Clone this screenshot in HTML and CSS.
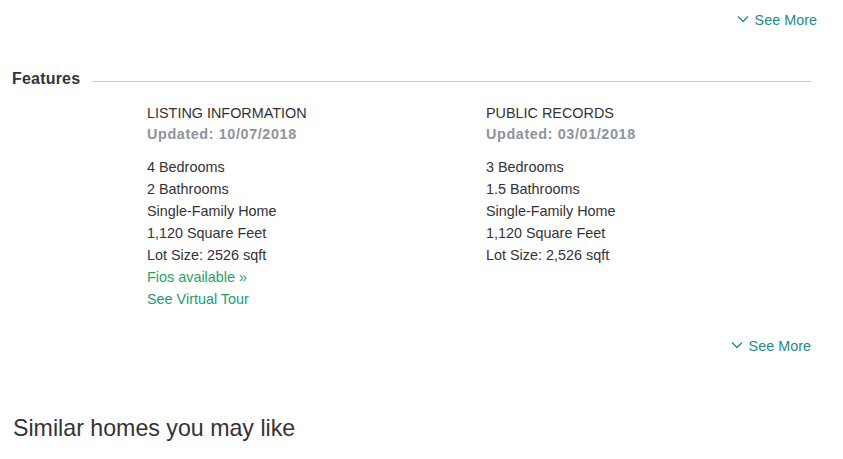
FILE: index.html
```html
<!doctype html>
<html>
<head>
  <meta charset="utf-8">
  <title>Features</title>
  <link rel="stylesheet" href="styles.css">
</head>
<body>
  <div class="more-row top">
    <a class="see-more" href="#">
      <svg width="12" height="8" viewBox="0 0 12 8"><path d="M1 1.5 L6 6.5 L11 1.5" fill="none" stroke="currentColor" stroke-width="1.3"/></svg>
      See More
    </a>
  </div>

  <div class="section-title">
    <h3>Features</h3>
    <span class="rule"></span>
  </div>

  <div class="feature-cols">
    <div class="col">
      <div class="col-title">LISTING INFORMATION</div>
      <div class="updated">Updated: 10/07/2018</div>
      <ul>
        <li>4 Bedrooms</li>
        <li>2 Bathrooms</li>
        <li>Single-Family Home</li>
        <li>1,120 Square Feet</li>
        <li>Lot Size: 2526 sqft</li>
        <li><a class="fios" href="#">Fios available &raquo;</a></li>
        <li><a class="tour" href="#">See Virtual Tour</a></li>
      </ul>
    </div>
    <div class="col">
      <div class="col-title">PUBLIC RECORDS</div>
      <div class="updated">Updated: 03/01/2018</div>
      <ul>
        <li>3 Bedrooms</li>
        <li>1.5 Bathrooms</li>
        <li>Single-Family Home</li>
        <li>1,120 Square Feet</li>
        <li>Lot Size: 2,526 sqft</li>
      </ul>
    </div>
  </div>

  <div class="more-row bottom">
    <a class="see-more" href="#">
      <svg width="12" height="8" viewBox="0 0 12 8"><path d="M1 1.5 L6 6.5 L11 1.5" fill="none" stroke="currentColor" stroke-width="1.3"/></svg>
      See More
    </a>
  </div>

  <h2 class="similar">Similar homes you may like</h2>
</body>
</html>
```

FILE: styles.css
```css
body {
  margin: 0;
  font-family: "Liberation Sans", Arial, sans-serif;
  font-size: 14px;
  color: #333;
  background: #fff;
}

a {
  text-decoration: none;
}

.more-row {
  display: flex;
  justify-content: flex-end;
}

.more-row.top {
  padding: 5px 26px 0 0;
  height: 30px;
}

.more-row.bottom {
  padding: 21px 32px 0 0;
  height: 30px;
}

.see-more {
  display: flex;
  align-items: center;
  gap: 6px;
  color: #1f8a86;
  font-size: 14.4px;
  line-height: 18px;
}

.see-more svg {
  margin-top: -2px;
}

.section-title {
  display: flex;
  align-items: center;
  gap: 12px;
  margin: 34px 32px 0 12px;
}

.section-title h3 {
  margin: 0;
  font-size: 16px;
  font-weight: bold;
  color: #333;
  line-height: 20px;
  letter-spacing: 0.2px;
}

.rule {
  flex-grow: 1;
  height: 1px;
  background: #ccc;
  margin-top: 4px;
}

.feature-cols {
  display: grid;
  grid-template-columns: 339px 339px;
  margin: 15px 0 0 147px;
}

.col-title {
  font-size: 14.4px;
  line-height: 18px;
  color: #333;
}

.updated {
  margin-top: 3px;
  font-size: 14.4px;
  font-weight: bold;
  color: #8d949b;
  line-height: 18px;
  letter-spacing: 0.6px;
}

.col ul {
  list-style: none;
  margin: 13px 0 0;
  padding: 0;
}

.col li {
  font-size: 14.4px;
  line-height: 22px;
}

.fios {
  color: #1fa463;
}

.tour {
  color: #1e9a76;
}

.similar {
  margin: 53px 0 0 13px;
  font-size: 23.2px;
  font-weight: normal;
  color: #333;
  line-height: 28px;
}
```
